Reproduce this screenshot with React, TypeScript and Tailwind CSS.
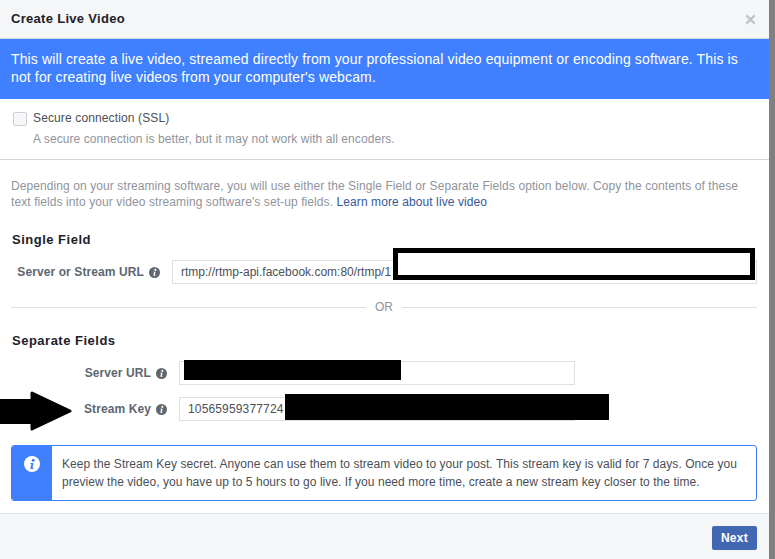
const InfoIcon = ({ size, bg, fg }: { size: string; bg: string; fg: string }) => (
  <svg viewBox="0 0 16 16" className={size}>
    <circle cx="8" cy="8" r="8" fill={bg} />
    <circle cx="9.200" cy="4.200" r="1.500" fill={fg} />
    <path d="M6.200 7h3.400L8.500 11.500c-.1.400.3.500 1.300 0l-.2.900c-1.100.7-3.600 1-3.200-.7L7.400 7.900l-1.200-.2z" fill={fg} />
  </svg>
);

const FieldLabel = ({ text, width }: { text: string; width: string }) => (
  <div className={`flex items-center justify-end shrink-0 ${width}`}>
    <span className="text-[12px] font-bold text-[#606770] tracking-[0.1px]">{text}</span>
    <span className="ml-[5px]">
      <InfoIcon size="block w-[11px] h-[11px]" bg="#606770" fg="#fff" />
    </span>
  </div>
);

const Redaction = ({ className }: { className: string }) => (
  <div className={`absolute bg-black ${className}`} />
);

export default function App() {
  return (
    <div className="w-[775px] h-[559px] bg-[#808080] overflow-hidden font-['Liberation_Sans',Arial,sans-serif]">
      <div className="relative w-[769px] h-[559px] bg-white flex flex-col">
        {/* Header */}
        <div className="h-[39px] shrink-0 bg-[#f5f6f7] border-b border-[#d5d7db] flex items-center justify-between pl-[11px] pr-[13px]">
          <span className="text-[13px] font-bold text-[#1d2129] tracking-[0.3px]">Create Live Video</span>
          <svg viewBox="0 0 12 12" className="w-[11px] h-[11px] text-[#c0c3c9]">
            <path d="M1.500 1.500l9 9M10.500 1.500l-9 9" stroke="currentColor" strokeWidth="2.400" />
          </svg>
        </div>

        {/* Notice */}
        <div className="h-[60px] shrink-0 bg-[#4080ff] px-[11px] pt-[11px] text-[14px] leading-[18px] text-white tracking-[0.13px]">
          This will create a live video, streamed directly from your professional video equipment or encoding software. This is not for creating live videos from your computer's webcam.
        </div>

        {/* SSL option */}
        <div className="h-[61px] shrink-0 border-b border-[#d5d7db] pl-[13px] pt-[11px] flex">
          <div className="w-[14px] h-[14px] mt-[2px] bg-[#f6f7f9] border border-[#ced0d4] rounded-[2px] shrink-0" />
          <div className="ml-[6px]">
            <div className="text-[12px] leading-[16px] text-[#4b4f56] tracking-[0.13px]">Secure connection (SSL)</div>
            <div className="text-[12px] leading-[16px] mt-[5px] text-[#90949c] tracking-[0.07px]">A secure connection is better, but it may not work with all encoders.</div>
          </div>
        </div>

        {/* Body */}
        <div className="pl-[11px] pr-[12px] pt-[18px] flex-1">
          <p className="text-[12px] leading-[16px] text-[#90949c] tracking-[0.09px]">
            Depending on your streaming software, you will use either the Single Field or Separate Fields option below. Copy the contents of these text fields into your video streaming software's set-up fields. <span className="text-[#365899]">Learn more about live video</span>
          </p>

          <h3 className="mt-[22px] pl-px text-[13px] leading-[16px] font-bold text-[#1d2129] tracking-[0.5px]">Single Field</h3>
          <div className="mt-[12px] flex items-center">
            <FieldLabel text="Server or Stream URL" width="w-[149px]" />
            <div className="ml-[12px] flex-1 h-[24px] border border-[#dddfe2] flex items-center px-[8px] text-[12px] text-[#4b4f56]">
              rtmp://rtmp-api.facebook.com:80/rtmp/1
            </div>
          </div>

          <div className="mt-[16px] flex items-center">
            <div className="flex-1 h-px bg-[#dddfe2]" />
            <span className="mx-[9px] text-[12px] leading-[14px] text-[#90949c]">OR</span>
            <div className="flex-1 h-px bg-[#dddfe2]" />
          </div>

          <h3 className="mt-[19px] pl-px text-[13px] leading-[16px] font-bold text-[#1d2129] tracking-[0.5px]">Separate Fields</h3>
          <div className="mt-[12px] flex items-center">
            <FieldLabel text="Server URL" width="w-[156px]" />
            <div className="ml-[12px] w-[396px] h-[24px] border border-[#dddfe2]" />
          </div>
          <div className="mt-[12px] flex items-center">
            <FieldLabel text="Stream Key" width="w-[156px]" />
            <div className="ml-[12px] w-[396px] h-[24px] border border-[#dddfe2] flex items-center px-[8px] text-[12px] text-[#4b4f56] tracking-[0.15px]">
              10565959377724
            </div>
          </div>

          <div className="mt-[24px] h-[56px] flex border border-[#4080ff] rounded-[3px] overflow-hidden">
            <div className="w-[40px] shrink-0 bg-[#4080ff] flex justify-center pt-[10px]">
              <InfoIcon size="w-[16px] h-[16px]" bg="#fff" fg="#4080ff" />
            </div>
            <p className="pl-[10px] pt-[9px] text-[12px] leading-[18px] text-[#4b4f56] tracking-[0.05px]">
              Keep the Stream Key secret. Anyone can use them to stream video to your post. This stream key is valid for 7 days. Once you preview the video, you have up to 5 hours to go live. If you need more time, create a new stream key closer to the time.
            </p>
          </div>
        </div>

        {/* Footer */}
        <div className="h-[46px] shrink-0 bg-[#f5f6f7] border-t border-[#dddfe2] flex justify-end items-start pt-[12px] pr-[12px]">
          <button className="w-[45px] h-[24px] bg-[#4267b2] rounded-[2px] text-[12px] font-bold text-white tracking-[0.3px]">Next</button>
        </div>

        {/* Annotations drawn over the screenshot */}
        <div className="absolute left-[393px] top-[248px] w-[362px] h-[32px] bg-white border-[5px] border-black" />
        <Redaction className="left-[184px] top-[360px] w-[217px] h-[20px]" />
        <Redaction className="left-[285px] top-[394px] w-[324px] h-[26px]" />
        <svg viewBox="0 0 72 42" className="absolute left-0 top-[390px] w-[72px] h-[42px]">
          <path d="M-4 10.500H32V3L70 21L32 39V32.500H-4z" fill="#000" stroke="#000" strokeWidth="3" strokeLinejoin="round" />
        </svg>
      </div>
    </div>
  );
}
